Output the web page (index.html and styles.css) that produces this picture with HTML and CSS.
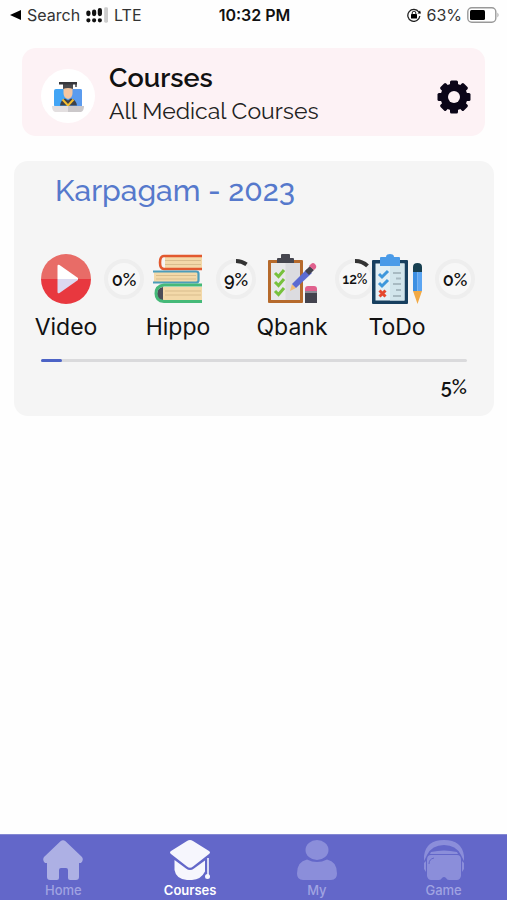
FILE: index.html
```html
<!DOCTYPE html>
<html lang="en">
<head>
    <meta charset="UTF-8">
    <meta name="viewport" content="width=device-width, initial-scale=1.0">
    <title>Courses</title>
    <link rel="stylesheet" href="styles.css">
</head>
<body>

    <div class="status-bar">
        <div class="status-left">
            <svg width="11" height="10" viewBox="0 0 11 10"><path d="M0 5 11 0V10Z"/></svg>
            <span>Search</span>
            <svg class="signal" width="22" height="16" viewBox="0 0 23 16">
                <g stroke="#111" stroke-width="4.400" stroke-linecap="round">
                    <path d="M2.500 5.500V7M8.500 4.500V7M14.500 3V7M2.500 13.500v.1M8.500 13.500v.1M14.500 13.500v.1"/>
                </g>
                <rect x="19" y="0" width="4" height="16" rx="1.500" fill="#ccc"/>
            </svg>
            <span>LTE</span>
        </div>
        <strong class="time">10:32 PM</strong>
        <div class="status-right">
            <svg width="14" height="14" viewBox="0 0 14 14">
                <path d="M11.800 4A6 6 0 1 0 12.800 8" fill="none" stroke="#222" stroke-width="1.300"/>
                <path d="M10.500 5.500h3.500L13 2.500Z"/>
                <rect x="4" y="6" width="6" height="4.500" rx=".6"/>
                <path d="M5.200 6.500V5a1.800 1.800 0 0 1 3.600 0v1.500" fill="none" stroke="#222" stroke-width="1"/>
            </svg>
            <span>63%</span>
            <svg width="32" height="16" viewBox="0 0 32 16">
                <rect x=".8" y=".8" width="28" height="14.400" rx="4" fill="#fff" stroke="#999" stroke-width="1.400"/>
                <rect x="3" y="3" width="15" height="10" rx="1.500"/>
                <path d="M30.500 5.500q2 2.500 0 5Z" fill="#999"/>
            </svg>
        </div>
    </div>

    <header class="header">
        <div class="avatar">
            <svg width="32" height="31" viewBox="0 0 32 31">
                <rect x="2" y="8" width="28" height="18" rx="2" fill="#42a5f5"/>
                <path d="M16 8h12a2 2 0 0 1 2 2v16H16Z" fill="#5b9bee"/>
                <path d="M8 24.500q1-6 5-7l3 2 3-2q5 1 6 7Z" fill="#3d4148"/>
                <path d="M10.500 18.500 16 24.500l5.500-6" fill="none" stroke="#f3bd2f" stroke-width="2"/>
                <path d="M11.500 7v5q0 5 4.500 6 4.500-1 4.500-6V7Z" fill="#f5c6a0"/>
                <path d="M11 3h10v5q-5-2-10 0Z" fill="#4a4a4e"/>
                <path d="M7 1h18v2.500H7Z" fill="#37373b"/>
                <path d="M24 3v3" stroke="#37373b" stroke-width="1.400"/>
                <path d="M0 25h16v6H3q-3-1-3-6Z" fill="#e3dfe0"/>
                <path d="M16 25h16q0 5-3 6H16Z" fill="#cbc8ca"/>
            </svg>
        </div>
        <div class="header-text">
            <h1>Courses</h1>
            <p>All Medical Courses</p>
        </div>
        <button class="settings" aria-label="Settings">
            <svg width="34" height="34" viewBox="-17 -17 34 34">
                <g fill="#0b0618">
                    <circle r="13.500"/>
                    <rect x="-4" y="-16.500" width="8" height="33" rx="1.500"/>
                    <rect x="-4" y="-16.500" width="8" height="33" rx="1.500" transform="rotate(45)"/>
                    <rect x="-4" y="-16.500" width="8" height="33" rx="1.500" transform="rotate(90)"/>
                    <rect x="-4" y="-16.500" width="8" height="33" rx="1.500" transform="rotate(135)"/>
                </g>
                <circle r="6" fill="#fdf2f5"/>
            </svg>
        </button>
    </header>

    <main class="card">
        <h2>Karpagam - 2023</h2>

        <div class="stats">
            <div class="stat">
                <svg class="icon" viewBox="0 0 50 50">
                    <path d="M0 25a25 25 0 0 1 50 0Z" fill="#e86c67"/>
                    <path d="M0 25a25 25 0 0 0 50 0Z" fill="#e8383f"/>
                    <path d="M16.500 25V12q0-2 2-1L37 24v1Z" fill="#fff"/>
                    <path d="M16.500 25v13q0 2 2 1L37 26v-1Z" fill="#dcd9f0"/>
                </svg>
                <div class="ring">
                    <svg viewBox="0 0 40 40"><circle cx="20" cy="20" r="18"/></svg>
                    <span>0%</span>
                </div>
                <span class="label">Video</span>
            </div>
            <div class="stat">
                <svg class="icon" viewBox="0 0 50 50">
                    <path d="M49 3H12v11h37Z" fill="#f3d9a9"/>
                    <path d="M1 18h44v10H1Z" fill="#f3d9a9"/>
                    <path d="M49 33H10v13h39Z" fill="#f3d9a9"/>
                    <path d="M12 6.500h36M12 10.500h36M3 21.500h40M3 25h40M12 37h36M12 41h36" stroke="#d9bd8d" stroke-width="1"/>
                    <path d="M49 2H11q-4 0-4 6.500t4 6.500H49" fill="none" stroke="#e2592f" stroke-width="2.600"/>
                    <path d="M0 17.500H43q2.500 0 2.500 2v7q0 2-2.500 2H0" fill="none" stroke="#4c9dba" stroke-width="2.200"/>
                    <path d="M10 33q-6 1-6 7t6 6Z" fill="#4c4d58"/>
                    <path d="M49 31H11Q3 32 3 39.500T11 47.500H49" fill="none" stroke="#45b978" stroke-width="3"/>
                </svg>
                <div class="ring">
                    <svg viewBox="0 0 40 40">
                        <circle cx="20" cy="20" r="18"/>
                        <path class="arc" d="M20 2A18 18 0 0 1 30.500 5.400"/>
                    </svg>
                    <span>9%</span>
                </div>
                <span class="label">Hippo</span>
            </div>
            <div class="stat wide">
                <svg class="icon" viewBox="0 0 50 50">
                    <rect x="1" y="6" width="35" height="43" rx="1" fill="#b66a2c"/>
                    <rect x="4" y="9" width="29" height="37" fill="#e8e8ea"/>
                    <path d="M18.500 9H33v37H18.500Z" fill="#dcdce0"/>
                    <path d="M10 9V5q0-1 1-1h3V1q0-1 1-1h7q1 0 1 1v3h3q1 0 1 1v4Z" fill="#46464f"/>
                    <path d="m8 19 3.500 3.500L17 16M8 28l3.500 3.500L17 25M8 37l3.500 3.500L17 34" fill="none" stroke="#77c13d" stroke-width="3"/>
                    <path d="m23 37 2-7 4 4Z" fill="#f2bd77"/>
                    <path d="m25 30 15-15 5 4-16 15Z" fill="#5c6bd2"/>
                    <path d="m38 17 5-5 4 4-5 5Z" fill="#43434e"/>
                    <path d="m42 12 2-2q2-2 4 0t1 4l-2 2Z" fill="#e0608d"/>
                    <path d="M38 37v-2q0-3 3-3h6q3 0 3 3v2Z" fill="#e0608d"/>
                    <path d="M38 37h12v12H38Z" fill="#43434e"/>
                    <path d="M38 38h12" stroke="#a4a2ae" stroke-width="1.500"/>
                </svg>
                <div class="ring">
                    <svg viewBox="0 0 40 40">
                        <circle cx="20" cy="20" r="18"/>
                        <path class="arc" d="M20 2A18 18 0 0 1 32.500 6.900"/>
                    </svg>
                    <span class="small">12%</span>
                </div>
                <span class="label">Qbank</span>
            </div>
            <div class="stat">
                <svg class="icon" viewBox="0 0 50 50">
                    <rect x="0" y="6" width="36" height="44" rx="1" fill="#173f5f"/>
                    <rect x="3.500" y="9.500" width="29" height="37" fill="#e3f0f5"/>
                    <path d="M18 9.500h14.500v37H18Z" fill="#d2e5ec"/>
                    <path d="M8 12V4q0-1 1-1h5q0-3 4-3t4 3h5q1 0 1 1v8Z" fill="#4a9be8"/>
                    <path d="m7 20 3 3 6-6M7 29l3 3 6-6" fill="none" stroke="#3f98dc" stroke-width="3"/>
                    <path d="m7.500 36.500 6 6m0-6-6 6" stroke="#e5492f" stroke-width="3"/>
                    <path d="M21 19h8M24 24.500h5M21 30h8M24 36h5M21 42h8" stroke="#a8bac2" stroke-width="2"/>
                    <path d="M41 18v-5q0-4 4.500-4t4.500 4v5Z" fill="#173f50"/>
                    <path d="M41 18h4.500v19H41Z" fill="#3c8fe2"/>
                    <path d="M45.500 18H50v19h-4.500Z" fill="#5ba5f2"/>
                    <path d="M41 37h9l-3.500 10-1 3-1-3Z" fill="#f2a944"/>
                </svg>
                <div class="ring">
                    <svg viewBox="0 0 40 40"><circle cx="20" cy="20" r="18"/></svg>
                    <span>0%</span>
                </div>
                <span class="label">ToDo</span>
            </div>
        </div>

        <progress class="total" value="5" max="100" aria-label="Total progress"></progress>
        <p class="total-text">5%</p>
    </main>

    <nav class="tabs">
        <a href="#home" class="tab home">
            <svg width="40" height="40" viewBox="0 0 40 40">
                <path d="M17.500 1.200q2.500-2 5 0L39 17q2 3-1 6h-2v14q0 3-3 3h-6q-2 0-2-2V30q0-2-2-2h-5q-2 0-2 2v8q0 2-2 2H7q-3 0-3-3V23H2q-3-3-1-6Z"/>
            </svg>
            <span>Home</span>
        </a>
        <a href="#courses" class="tab active">
            <svg width="40" height="40" viewBox="0 0 40 40">
                <path d="M17 1q3-2 6 0l16 10q2 1.500 0 3L23 26.500q-3 2.500-6 0L1 14q-2-1.500 0-3Z"/>
                <path d="M4.500 20 16 28.500q4 3 8 0l11-8v11q-4 8-13 8.500h-5Q6 39 4.500 30Z"/>
                <path d="M38 18v17" stroke="#fff" stroke-width="1.500"/>
                <circle cx="37.500" cy="36.500" r="2.500"/>
            </svg>
            <span>Courses</span>
        </a>
        <a href="#my" class="tab">
            <svg width="40" height="40" viewBox="0 0 40 40">
                <ellipse cx="20" cy="10" rx="11.500" ry="10"/>
                <path d="M10 19.500q10 5 20 0 10 2 10 14 0 6.500-6 6.500H6q-6 0-6-6.500 0-12 10-14Z"/>
            </svg>
            <span>My</span>
        </a>
        <a href="#game" class="tab">
            <svg width="40" height="40" viewBox="0 0 40 40">
                <path d="M0 21V16Q2 0 20 0t20 16v5l-3-6Q32 5 20 5T3 15Z"/>
                <path d="M7 12q13-3 26 0l1 2H6Z"/>
                <path d="M7 15h26q4 0 4 5v16q-1 4-4 4h-8q-2 0-3-2-2-2-4 0-1 2-3 2H7q-3 0-4-4V20q0-5 4-5Z"/>
                <path d="M0 23l2-2v11l-2-3ZM40 23l-2-2v11l2-3Z"/>
                <path d="M5 24q0-5 5-6" fill="none" stroke="#6367c9" stroke-width="1"/>
            </svg>
            <span>Game</span>
        </a>
    </nav>

</body>
</html>
```

FILE: styles.css
```css
* {
    box-sizing: border-box;
}
body {
    margin: 0;
    min-height: 100vh;
    display: flex;
    flex-direction: column;
    background: #fefefe;
    color: #111;
    font-family: Inter, "Liberation Sans", sans-serif;
}
h1, h2, p {
    margin: 0;
    font-weight: normal;
}
svg {
    display: block;
    flex-shrink: 0;
}

/* status bar */
.status-bar {
    display: grid;
    grid-template-columns: 1fr auto 1fr;
    align-items: center;
    height: 30px;
    padding: 0 8px 0 10px;
    font-size: 16px;
    color: #333;
}
.status-left, .status-right {
    display: flex;
    align-items: center;
    gap: 6px;
}
.status-right {
    justify-content: flex-end;
    gap: 5px;
}
.time {
    font-weight: 600;
    color: #111;
}

/* header */
.header {
    display: flex;
    align-items: center;
    height: 88px;
    margin: 18px 22px 0;
    padding: 0 14px 0 19px;
    border-radius: 14px;
    background: #fdf2f5;
    font-family: Raleway, Lato, sans-serif;
}
.avatar {
    display: flex;
    align-items: center;
    justify-content: center;
    width: 54px;
    height: 54px;
    margin-top: 8px;
    border-radius: 50%;
    background: #fff;
}
.header-text {
    flex: 1;
    padding: 4px 0 0 14px;
}
.header h1 {
    font-size: 27px;
    line-height: 34px;
    font-weight: 600;
}
.header p {
    font-size: 23px;
    line-height: 32px;
    color: #222;
}
.settings {
    margin-top: 10px;
    padding: 0;
    border: none;
    background: none;
    cursor: pointer;
}

/* course card */
.card {
    margin: 25px 13px 0 14px;
    padding: 12px 27px;
    border-radius: 14px;
    background: #f5f5f5;
}
.card h2 {
    padding-left: 14px;
    font-family: Raleway, Lato, sans-serif;
    font-size: 30px;
    line-height: 36px;
    font-weight: 500;
    color: #5679cc;
}
.stats {
    display: grid;
    grid-template-columns: minmax(0, 112fr) minmax(0, 114fr) minmax(0, 105fr) minmax(0, 101fr);
    margin: 45px -6px 0 0;
}
.stat {
    display: grid;
    grid-template-columns: 50px 40px;
    column-gap: 13px;
    row-gap: 8px;
    align-items: center;
}
.wide {
    column-gap: 18px;
}
.icon {
    width: 50px;
    height: 50px;
}
.ring {
    display: grid;
    place-items: center;
    width: 40px;
    height: 40px;
    font-family: Raleway, Lato, sans-serif;
    font-size: 18px;
    font-weight: 600;
}
.ring svg, .ring span {
    grid-area: 1 / 1;
}
.ring circle {
    fill: #f7f7f7;
    stroke: #eee;
    stroke-width: 4;
}
.ring .arc {
    fill: none;
    stroke: #333;
    stroke-width: 4;
}
.ring .small {
    font-size: 14px;
}
.label {
    justify-self: center;
    font-size: 23px;
    line-height: 30px;
}
.total {
    display: block;
    appearance: none;
    width: 100%;
    height: 3px;
    margin-top: 17px;
    border: none;
}
.total::-webkit-progress-bar {
    border-radius: 2px;
    background: #dadadc;
}
.total::-webkit-progress-value {
    border-radius: 2px;
    background: #4c63c6;
}
.total-text {
    margin-top: 10px;
    padding-bottom: 2px;
    font-family: Raleway, Lato, sans-serif;
    font-size: 20px;
    line-height: 30px;
    font-weight: 600;
    text-align: right;
}

/* bottom tabs */
.tabs {
    display: grid;
    grid-template-columns: repeat(4, 1fr);
    height: 66px;
    margin-top: auto;
    border-top: 1px solid #8488d2;
    background: #6367c9;
}
.tab {
    display: flex;
    flex-direction: column;
    align-items: center;
    padding-top: 5px;
    font-size: 13px;
    line-height: 20px;
    font-weight: 500;
    text-decoration: none;
    color: #a0a3e2;
}
.tab svg {
    fill: #8b8eda;
}
.home svg {
    fill: #adb0e4;
}
.active {
    font-weight: 600;
    color: #fff;
}
.active svg {
    fill: #f6f6fd;
}
```
